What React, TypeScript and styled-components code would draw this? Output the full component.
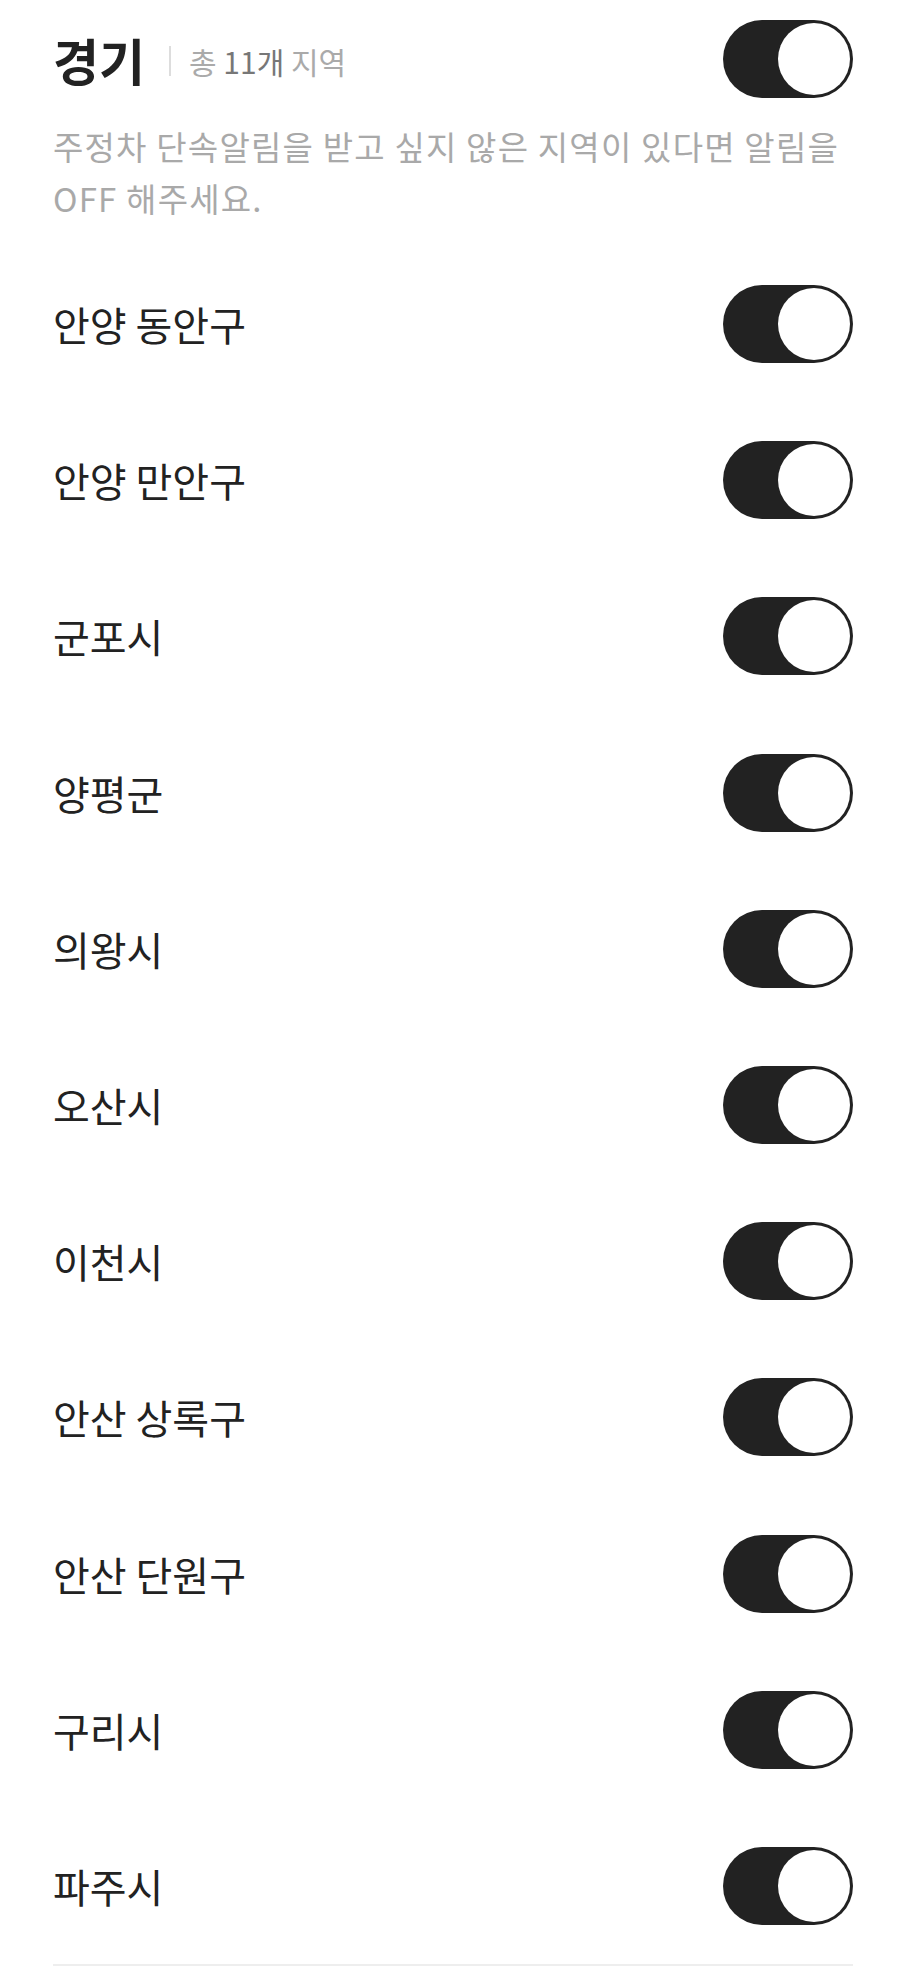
import React, { useState } from 'react';
import styled, { createGlobalStyle } from 'styled-components';

const GlobalStyle = createGlobalStyle`
  html, body {
    margin: 0;
    padding: 0;
    background: #ffffff;
  }
  body {
    font-family: 'Noto Sans CJK KR', 'Noto Sans', sans-serif;
    -webkit-font-smoothing: antialiased;
  }
`;

const REGIONS = [
  '안양 동안구',
  '안양 만안구',
  '군포시',
  '양평군',
  '의왕시',
  '오산시',
  '이천시',
  '안산 상록구',
  '안산 단원구',
  '구리시',
  '파주시',
];

const Page = styled.div`
  width: 904px;
  padding: 20px 51px 0 53px;
  box-sizing: border-box;
`;

const Header = styled.div`
  display: flex;
  align-items: center;
  justify-content: space-between;
`;

const TitleGroup = styled.div`
  display: flex;
  align-items: center;
`;

const Title = styled.h2`
  margin: 0;
  font-size: 50px;
  font-weight: 700;
  color: #222222;
  line-height: 1;
`;

const Divider = styled.span`
  width: 2px;
  height: 30px;
  background: #dddddd;
  margin: 4px 18px 0 24px;
`;

const Count = styled.span`
  font-size: 30px;
  color: #aaaaaa;
  margin-top: 4px;

  strong {
    font-weight: 400;
    color: #777777;
  }
`;

const Description = styled.p`
  margin: 22px 0 0;
  font-size: 33px;
  line-height: 52px;
  color: #a9a9a9;
  letter-spacing: 1.2px;
`;

const List = styled.ul`
  list-style: none;
  margin: 22px 0 0;
  padding: 0;
  border-bottom: 2px solid #eeeeee;
`;

const Row = styled.li`
  height: 156.2px;
  display: flex;
  align-items: center;
  justify-content: space-between;
`;

const Label = styled.span`
  font-size: 40px;
  color: #222222;
`;

const Track = styled.button<{ $on: boolean }>`
  width: 130px;
  height: 78px;
  padding: 3px;
  border: none;
  border-radius: 39px;
  box-sizing: border-box;
  display: flex;
  align-items: center;
  justify-content: ${(p) => (p.$on ? 'flex-end' : 'flex-start')};
  background: ${(p) => (p.$on ? '#222222' : '#dddddd')};
  cursor: pointer;
  flex-shrink: 0;
`;

const Knob = styled.span`
  width: 72px;
  height: 72px;
  border-radius: 50%;
  background: #ffffff;
`;

function Toggle({ on, onChange }: { on: boolean; onChange: () => void }) {
  return (
    <Track $on={on} onClick={onChange} aria-pressed={on}>
      <Knob />
    </Track>
  );
}

export default function App() {
  const [all, setAll] = useState(true);
  const [states, setStates] = useState<boolean[]>(REGIONS.map(() => true));

  const flip = (i: number) =>
    setStates((prev) => prev.map((v, j) => (j === i ? !v : v)));

  return (
    <>
      <GlobalStyle />
      <Page>
        <Header>
          <TitleGroup>
            <Title>경기</Title>
            <Divider />
            <Count>
              총 <strong>11개</strong> 지역
            </Count>
          </TitleGroup>
          <Toggle on={all} onChange={() => setAll(!all)} />
        </Header>
        <Description>
          주정차 단속알림을 받고 싶지 않은 지역이 있다면 알림을 OFF 해주세요.
        </Description>
        <List>
          {REGIONS.map((name, i) => (
            <Row key={name}>
              <Label>{name}</Label>
              <Toggle on={states[i]} onChange={() => flip(i)} />
            </Row>
          ))}
        </List>
      </Page>
    </>
  );
}
